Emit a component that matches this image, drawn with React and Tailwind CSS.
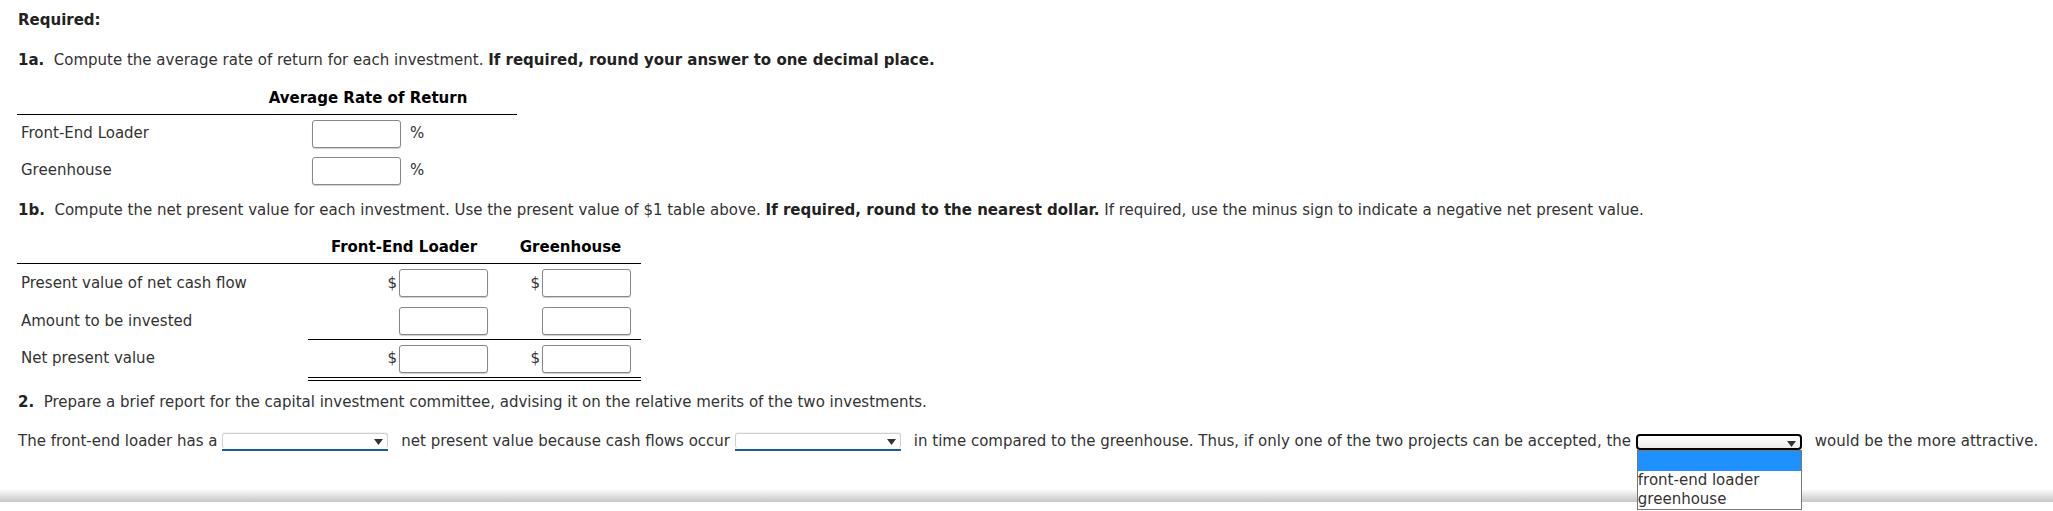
import React from 'react';

const FONT = "font-['DejaVu_Sans',Verdana,sans-serif]";

function Box() {
  return (
    <div className="h-[28px] w-[89px] rounded-[3px] border border-[#888] bg-white shadow-[0_1px_1px_rgba(0,0,0,0.2)]" />
  );
}

function Arrow() {
  return (
    <svg width="9" height="6" viewBox="0 0 9 6" className="absolute right-[4px] top-[5px]">
      <path d="M0 0 H9 L4.5 6 Z" fill="#333" />
    </svg>
  );
}

function PlainSelect() {
  return (
    <span className="inline-block border-b-2 border-[#1f5c8c] pb-px align-middle">
      <span className="relative block h-[15px] w-[166px] rounded-[3px] border border-[#d0d0d0] border-b-0 bg-white shadow-[0_-1px_1px_rgba(0,0,0,0.06)]">
        <Arrow />
      </span>
    </span>
  );
}

function OpenSelect() {
  const options = ['', 'front-end loader', 'greenhouse'];
  return (
    <span className="relative inline-block align-middle">
      <span className="relative block h-[16px] w-[166px] rounded-[4px] border-2 border-black bg-gradient-to-b from-white to-[#ececec]">
        <Arrow />
      </span>
      <span className="absolute left-px top-full z-10 block w-[165px] border border-[#767676] bg-white text-[15px] leading-[19px] text-[#333]">
        {options.map((o, i) => (
          <span
            key={i}
            className={`block h-[19px] whitespace-nowrap ${i === 0 ? 'h-[20px] bg-[#1e90ff]' : ''}`}
          >
            {o}
          </span>
        ))}
      </span>
    </span>
  );
}

export default function App() {
  return (
    <div className={`${FONT} relative min-h-[511px] w-[2053px] overflow-hidden bg-white text-[15px] text-[#333]`}>
      <div className="px-[18px]">
        <p className="pt-[11px] font-bold leading-[18px] text-[#222]">Required:</p>

        <p className="mt-[22px] whitespace-nowrap leading-[18px]">
          <b className="text-[#222]">1a.</b>&nbsp; Compute the average rate of return for each investment.{' '}
          <b className="text-[#222]">If required, round your answer to one decimal place.</b>
        </p>

        {/* table 1a */}
        <div className="-ml-px mt-[17px] w-[500px]">
          <div className="flex border-b border-black pb-[7px] pt-[3px] leading-[18px]">
            <div className="w-[203px]" />
            <div className="w-[296px] text-center font-bold text-black">Average Rate of Return</div>
          </div>
          {['Front-End Loader', 'Greenhouse'].map((label) => (
            <div key={label} className="flex h-[37px] items-center">
              <div className="w-[295px] pl-[4px]">{label}</div>
              <Box />
              <span className="ml-[9px]">%</span>
            </div>
          ))}
        </div>

        <p className="mt-[12px] whitespace-nowrap leading-[18px]">
          <b className="text-[#222]">1b.</b>&nbsp; Compute the net present value for each investment. Use the present value of $1 table above.{' '}
          <b className="text-[#222]">If required, round to the nearest dollar.</b> If required, use the minus sign to indicate a negative net present value.
        </p>

        {/* table 1b */}
        <div className="-ml-px mt-[16px] w-[624px]">
          <div className="flex border-b border-black pb-[7px] pt-[3px] font-bold leading-[18px] text-black">
            <div className="w-[291px]" />
            <div className="w-[192px] text-center">Front-End Loader</div>
            <div className="w-[141px] text-center">Greenhouse</div>
          </div>

          <div className="flex h-[38px] items-center">
            <div className="w-[291px] pl-[4px]">Present value of net cash flow</div>
            <div className="flex w-[192px] items-center justify-end pr-[12px]">
              <span className="mr-[2px]">$</span>
              <Box />
            </div>
            <div className="flex w-[141px] items-center justify-end pr-[10px]">
              <span className="mr-[2px]">$</span>
              <Box />
            </div>
          </div>

          <div className="flex h-[38px]">
            <div className="flex w-[291px] items-center pl-[4px]">Amount to be invested</div>
            <div className="flex w-[333px] border-b border-black">
              <div className="flex w-[192px] items-center justify-end pr-[12px]">
                <Box />
              </div>
              <div className="flex w-[141px] items-center justify-end pr-[10px]">
                <Box />
              </div>
            </div>
          </div>

          <div className="flex h-[41px]">
            <div className="flex h-[37px] w-[291px] items-center pl-[4px]">Net present value</div>
            <div className="flex w-[333px] border-b-4 border-double border-black">
              <div className="flex w-[192px] items-center justify-end pr-[12px]">
                <span className="mr-[2px]">$</span>
                <Box />
              </div>
              <div className="flex w-[141px] items-center justify-end pr-[10px]">
                <span className="mr-[2px]">$</span>
                <Box />
              </div>
            </div>
          </div>
        </div>

        <p className="mt-[12px] whitespace-nowrap leading-[18px]">
          <b className="text-[#222]">2.</b>&nbsp; Prepare a brief report for the capital investment committee, advising it on the relative merits of the two investments.
        </p>

        <p className="mt-[21px] whitespace-nowrap leading-[18px]">
          The front-end loader has a <PlainSelect />
          <span className="ml-[13px]">net present value because cash flows occur </span>
          <PlainSelect />
          <span className="ml-[13px]">in time compared to the greenhouse. Thus, if only one of the two projects can be accepted, the </span>
          <OpenSelect />
          <span className="ml-[13px]">would be the more attractive.</span>
        </p>
      </div>

      <div className="mt-[38px] h-[13px] w-full bg-gradient-to-b from-white to-[#c6c6c6]" />
    </div>
  );
}
